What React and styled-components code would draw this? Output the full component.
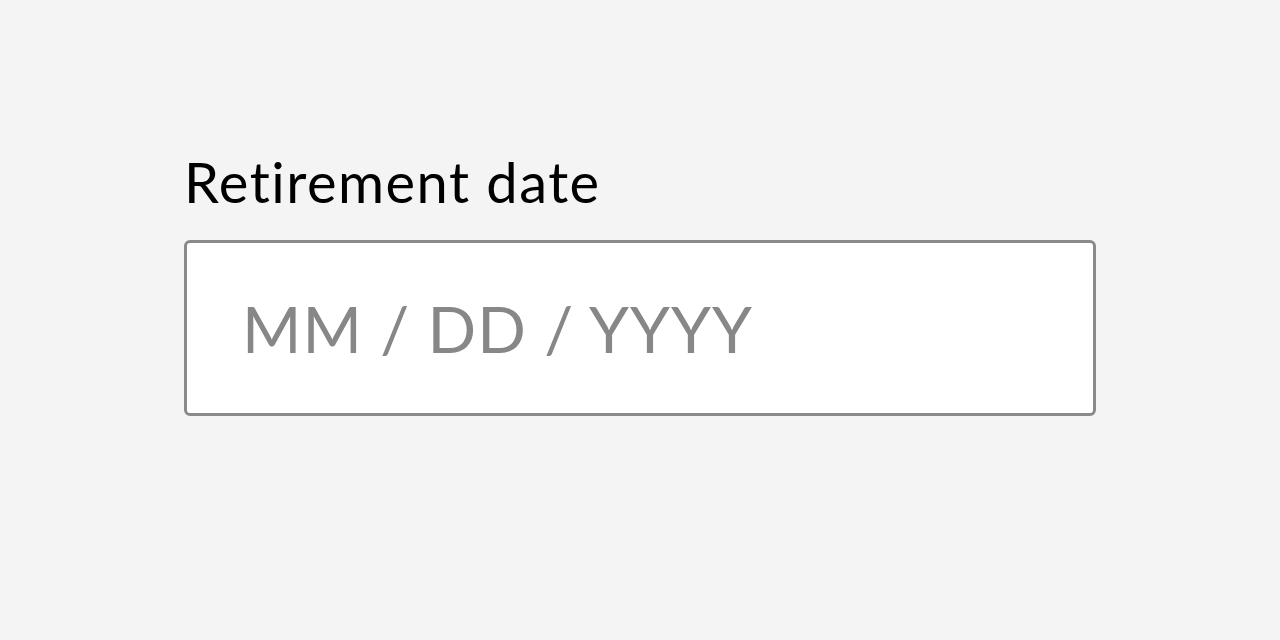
import React from 'react';
import { styled, createGlobalStyle } from 'styled-components';

const GlobalStyle = createGlobalStyle`
  html, body {
    margin: 0;
    padding: 0;
    background: #f4f4f4;
  }
  body {
    font-family: Lato, "Liberation Sans", sans-serif;
  }
`;

function App() {
  return (
    <>
      <GlobalStyle />
      <Page>
        <Field>
          <Label htmlFor="retirement-date">Retirement date</Label>
          <Input id="retirement-date" type="text" placeholder="MM / DD / YYYY" />
        </Field>
      </Page>
    </>
  );
}

export default App;

const Page = styled.div`
  width: 1280px;
  height: 640px;
  padding: 146px 0 0 184px;
  box-sizing: border-box;
`;

const Field = styled.div`
  display: flex;
  flex-direction: column;
  width: 912px;
`;

const Label = styled.label`
  font-family: Lato, "Liberation Sans", sans-serif;
  font-size: 56px;
  line-height: 72px;
  letter-spacing: 1.5px;
  color: #000;
  margin-bottom: 22px;
`;

const Input = styled.input`
  box-sizing: border-box;
  width: 912px;
  height: 176px;
  border: 3px solid #8a8a8c;
  border-radius: 6px;
  background: #fff;
  padding: 0 0 0 55px;
  font-family: Lato, "Liberation Sans", sans-serif;
  font-size: 64px;
  letter-spacing: 1px;
  color: #333;
  outline: none;

  &::placeholder {
    color: #878787;
    opacity: 1;
  }
`;
